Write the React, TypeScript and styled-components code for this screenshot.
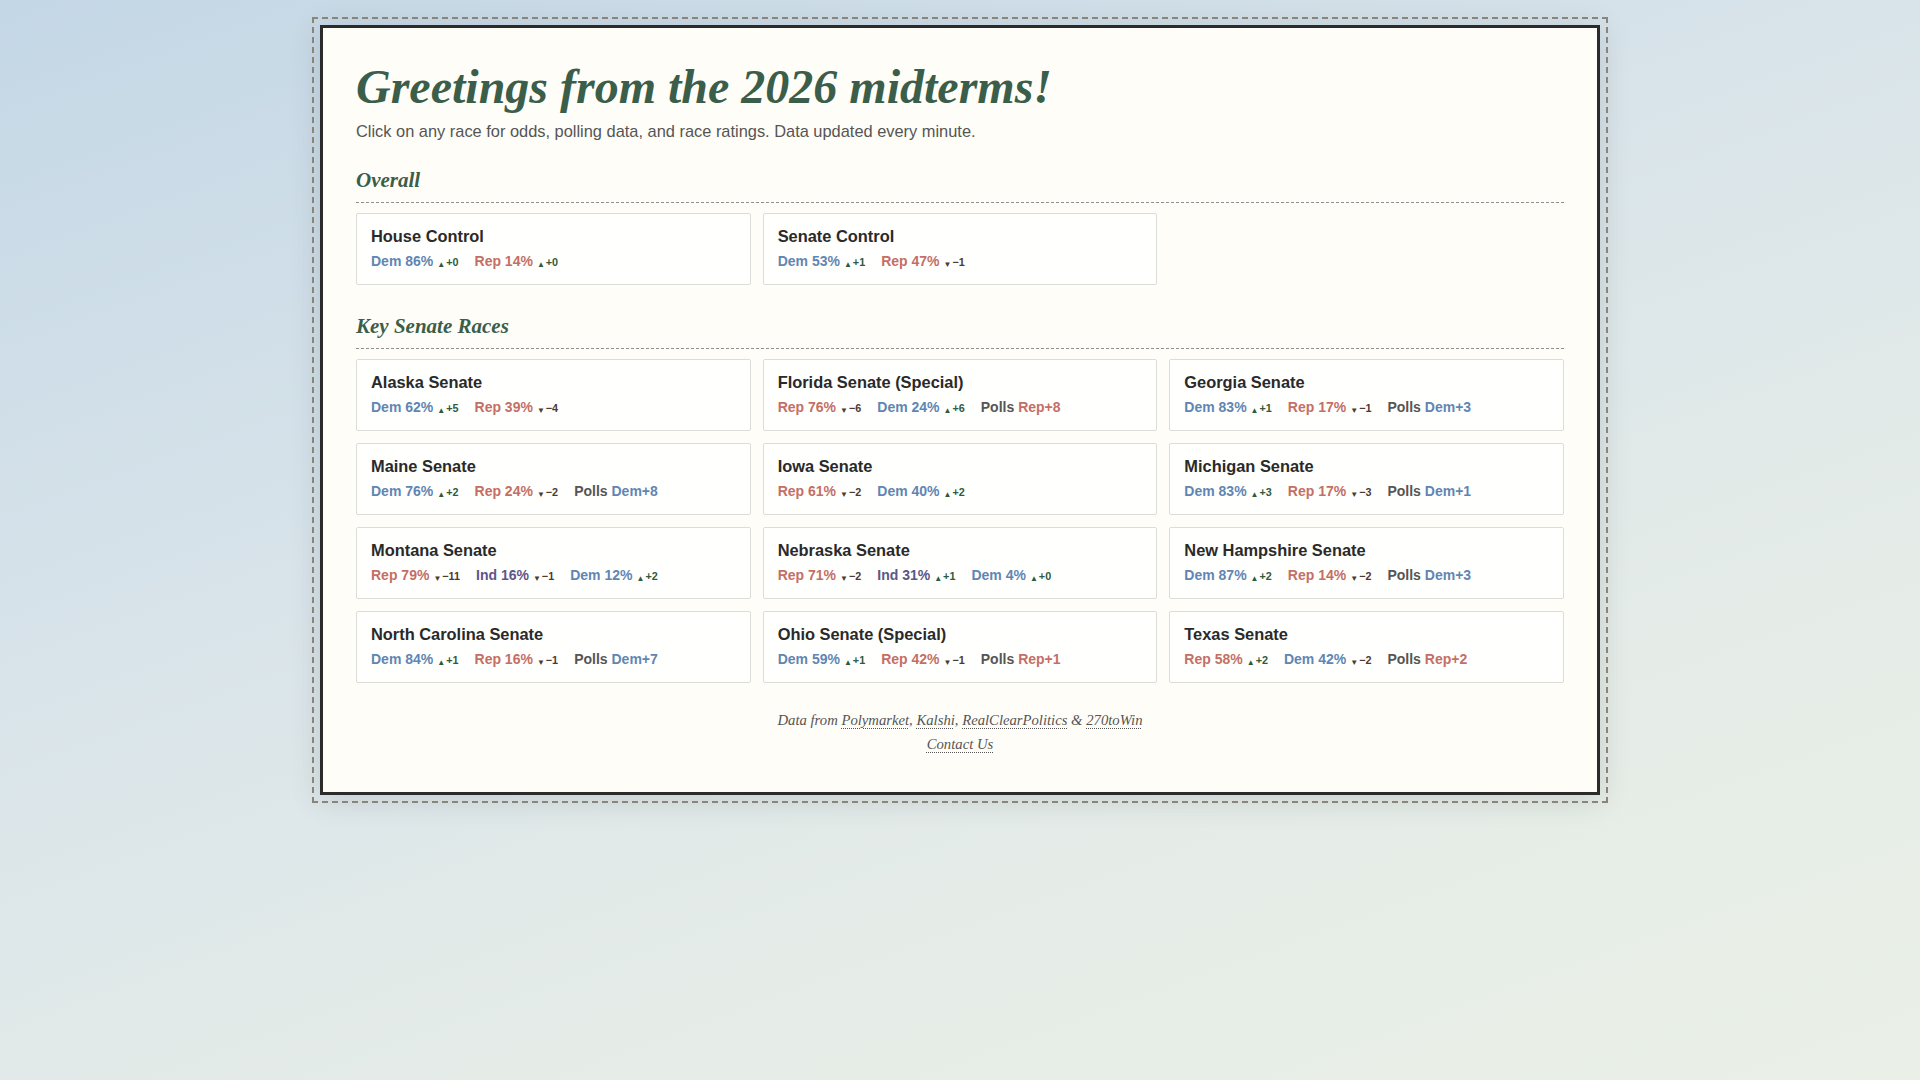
import styled, { createGlobalStyle } from 'styled-components';

const GlobalStyle = createGlobalStyle`
    html, body {
        margin: 0;
        padding: 0;
    }
    body {
        min-height: 1080px;
        background: linear-gradient(160deg, #c4d7e6 0%, #d9e4ea 40%, #e5ece8 70%, #eaf0e6 100%);
        font-family: 'Liberation Sans', Arial, sans-serif;
        color: #2a2a2a;
    }
    #root {
        padding: 25px 0 40px;
    }
`;

const Frame = styled.div`
    width: 1280px;
    margin: 0 auto;
    box-sizing: border-box;
    background: #fffdf7;
    border: 3px solid #2b2b2b;
    outline: 2px dashed #8b8579;
    outline-offset: 6px;
    padding: 30px 33px 36px;
    box-shadow: 0 4px 28px rgba(60, 70, 80, 0.18);
`;

const Title = styled.h1`
    margin: 0;
    font-family: 'Liberation Serif', 'Times New Roman', serif;
    font-style: italic;
    font-weight: 700;
    font-size: 48px;
    line-height: 1.2;
    color: #3b5e4b;
`;

const Subtitle = styled.p`
    margin: 4px 0 0;
    font-size: 16.4px;
    line-height: 1.4;
    color: #555;
`;

const Section = styled.section<{ $first?: boolean }>`
    margin-top: ${(p) => (p.$first ? '24px' : '28px')};
`;

const SectionTitle = styled.h2`
    margin: 0 0 10px;
    padding-bottom: 8px;
    border-bottom: 1px dashed #8f8f8f;
    font-family: 'Liberation Serif', 'Times New Roman', serif;
    font-style: italic;
    font-weight: 700;
    font-size: 21px;
    line-height: 1.3;
    color: #3b5e4b;
`;

const Grid = styled.div`
    display: grid;
    grid-template-columns: repeat(3, 1fr);
    gap: 12px;
`;

const Card = styled.div`
    background: #fffffd;
    border: 1px solid #dcdcd8;
    border-radius: 2px;
    padding: 11px 14px 10px;
    cursor: pointer;
`;

const CardTitle = styled.div`
    font-weight: 700;
    font-size: 16.4px;
    line-height: 22px;
    color: #2a2a2a;
`;

const Stats = styled.div`
    display: flex;
    align-items: baseline;
    gap: 16px;
    margin-top: 4px;
    font-size: 14px;
    font-weight: 700;
    line-height: 20px;
`;

const partyColors: Record<string, string> = {
    Dem: '#5f86b3',
    Rep: '#c46f66',
    Ind: '#5d5688',
};

const Stat = styled.span<{ $party: string }>`
    color: ${(p) => partyColors[p.$party]};
    white-space: nowrap;
`;

const Delta = styled.span<{ $up: boolean }>`
    margin-left: 4px;
    font-size: 10.8px;
    color: ${(p) => (p.$up ? '#2f5a3e' : '#4d3a32')};
`;

const Arrow = styled.span`
    font-size: 8px;
    margin-right: 1px;
    position: relative;
    top: 1px;
`;

const Polls = styled.span`
    color: #555;
    white-space: nowrap;
`;

const PollValue = styled.span<{ $party: string }>`
    color: ${(p) => partyColors[p.$party]};
`;

const Footer = styled.footer`
    margin-top: 25px;
    text-align: center;
    font-family: 'Liberation Serif', 'Times New Roman', serif;
    font-style: italic;
    font-size: 14.7px;
    line-height: 24px;
    color: #555;
`;

const FooterLink = styled.a`
    color: #555;
    text-decoration: underline dotted;
    text-underline-offset: 3px;
    text-decoration-thickness: 1px;
`;

type Odds = { party: string; pct: number; delta: number };
type Race = { name: string; odds: Odds[]; polls?: { party: string; margin: number } };

const overall: Race[] = [
    { name: 'House Control', odds: [{ party: 'Dem', pct: 86, delta: 0 }, { party: 'Rep', pct: 14, delta: 0 }] },
    { name: 'Senate Control', odds: [{ party: 'Dem', pct: 53, delta: 1 }, { party: 'Rep', pct: 47, delta: -1 }] },
];

const senate: Race[] = [
    { name: 'Alaska Senate', odds: [{ party: 'Dem', pct: 62, delta: 5 }, { party: 'Rep', pct: 39, delta: -4 }] },
    {
        name: 'Florida Senate (Special)',
        odds: [{ party: 'Rep', pct: 76, delta: -6 }, { party: 'Dem', pct: 24, delta: 6 }],
        polls: { party: 'Rep', margin: 8 },
    },
    {
        name: 'Georgia Senate',
        odds: [{ party: 'Dem', pct: 83, delta: 1 }, { party: 'Rep', pct: 17, delta: -1 }],
        polls: { party: 'Dem', margin: 3 },
    },
    {
        name: 'Maine Senate',
        odds: [{ party: 'Dem', pct: 76, delta: 2 }, { party: 'Rep', pct: 24, delta: -2 }],
        polls: { party: 'Dem', margin: 8 },
    },
    { name: 'Iowa Senate', odds: [{ party: 'Rep', pct: 61, delta: -2 }, { party: 'Dem', pct: 40, delta: 2 }] },
    {
        name: 'Michigan Senate',
        odds: [{ party: 'Dem', pct: 83, delta: 3 }, { party: 'Rep', pct: 17, delta: -3 }],
        polls: { party: 'Dem', margin: 1 },
    },
    {
        name: 'Montana Senate',
        odds: [
            { party: 'Rep', pct: 79, delta: -11 },
            { party: 'Ind', pct: 16, delta: -1 },
            { party: 'Dem', pct: 12, delta: 2 },
        ],
    },
    {
        name: 'Nebraska Senate',
        odds: [
            { party: 'Rep', pct: 71, delta: -2 },
            { party: 'Ind', pct: 31, delta: 1 },
            { party: 'Dem', pct: 4, delta: 0 },
        ],
    },
    {
        name: 'New Hampshire Senate',
        odds: [{ party: 'Dem', pct: 87, delta: 2 }, { party: 'Rep', pct: 14, delta: -2 }],
        polls: { party: 'Dem', margin: 3 },
    },
    {
        name: 'North Carolina Senate',
        odds: [{ party: 'Dem', pct: 84, delta: 1 }, { party: 'Rep', pct: 16, delta: -1 }],
        polls: { party: 'Dem', margin: 7 },
    },
    {
        name: 'Ohio Senate (Special)',
        odds: [{ party: 'Dem', pct: 59, delta: 1 }, { party: 'Rep', pct: 42, delta: -1 }],
        polls: { party: 'Rep', margin: 1 },
    },
    {
        name: 'Texas Senate',
        odds: [{ party: 'Rep', pct: 58, delta: 2 }, { party: 'Dem', pct: 42, delta: -2 }],
        polls: { party: 'Rep', margin: 2 },
    },
];

const RaceCard = ({ race }: { race: Race }) => (
    <Card>
        <CardTitle>{race.name}</CardTitle>
        <Stats>
            {race.odds.map((o) => {
                const up = o.delta >= 0;
                return (
                    <Stat key={o.party} $party={o.party}>
                        {o.party} {o.pct}%
                        <Delta $up={up}>
                            <Arrow>{up ? '▲' : '▼'}</Arrow>
                            {up ? `+${o.delta}` : `−${Math.abs(o.delta)}`}
                        </Delta>
                    </Stat>
                );
            })}
            {race.polls && (
                <Polls>
                    Polls{' '}
                    <PollValue $party={race.polls.party}>
                        {race.polls.party}+{race.polls.margin}
                    </PollValue>
                </Polls>
            )}
        </Stats>
    </Card>
);

const App = () => {
    return (
        <>
            <GlobalStyle />
            <Frame>
                <Title>Greetings from the 2026 midterms!</Title>
                <Subtitle>Click on any race for odds, polling data, and race ratings. Data updated every minute.</Subtitle>

                <Section $first>
                    <SectionTitle>Overall</SectionTitle>
                    <Grid>
                        {overall.map((r) => (
                            <RaceCard key={r.name} race={r} />
                        ))}
                    </Grid>
                </Section>

                <Section>
                    <SectionTitle>Key Senate Races</SectionTitle>
                    <Grid>
                        {senate.map((r) => (
                            <RaceCard key={r.name} race={r} />
                        ))}
                    </Grid>
                </Section>

                <Footer>
                    Data from <FooterLink href="#">Polymarket</FooterLink>, <FooterLink href="#">Kalshi</FooterLink>,{' '}
                    <FooterLink href="#">RealClearPolitics</FooterLink> &amp; <FooterLink href="#">270toWin</FooterLink>
                    <br />
                    <FooterLink href="#">Contact Us</FooterLink>
                </Footer>
            </Frame>
        </>
    );
};

export default App;
